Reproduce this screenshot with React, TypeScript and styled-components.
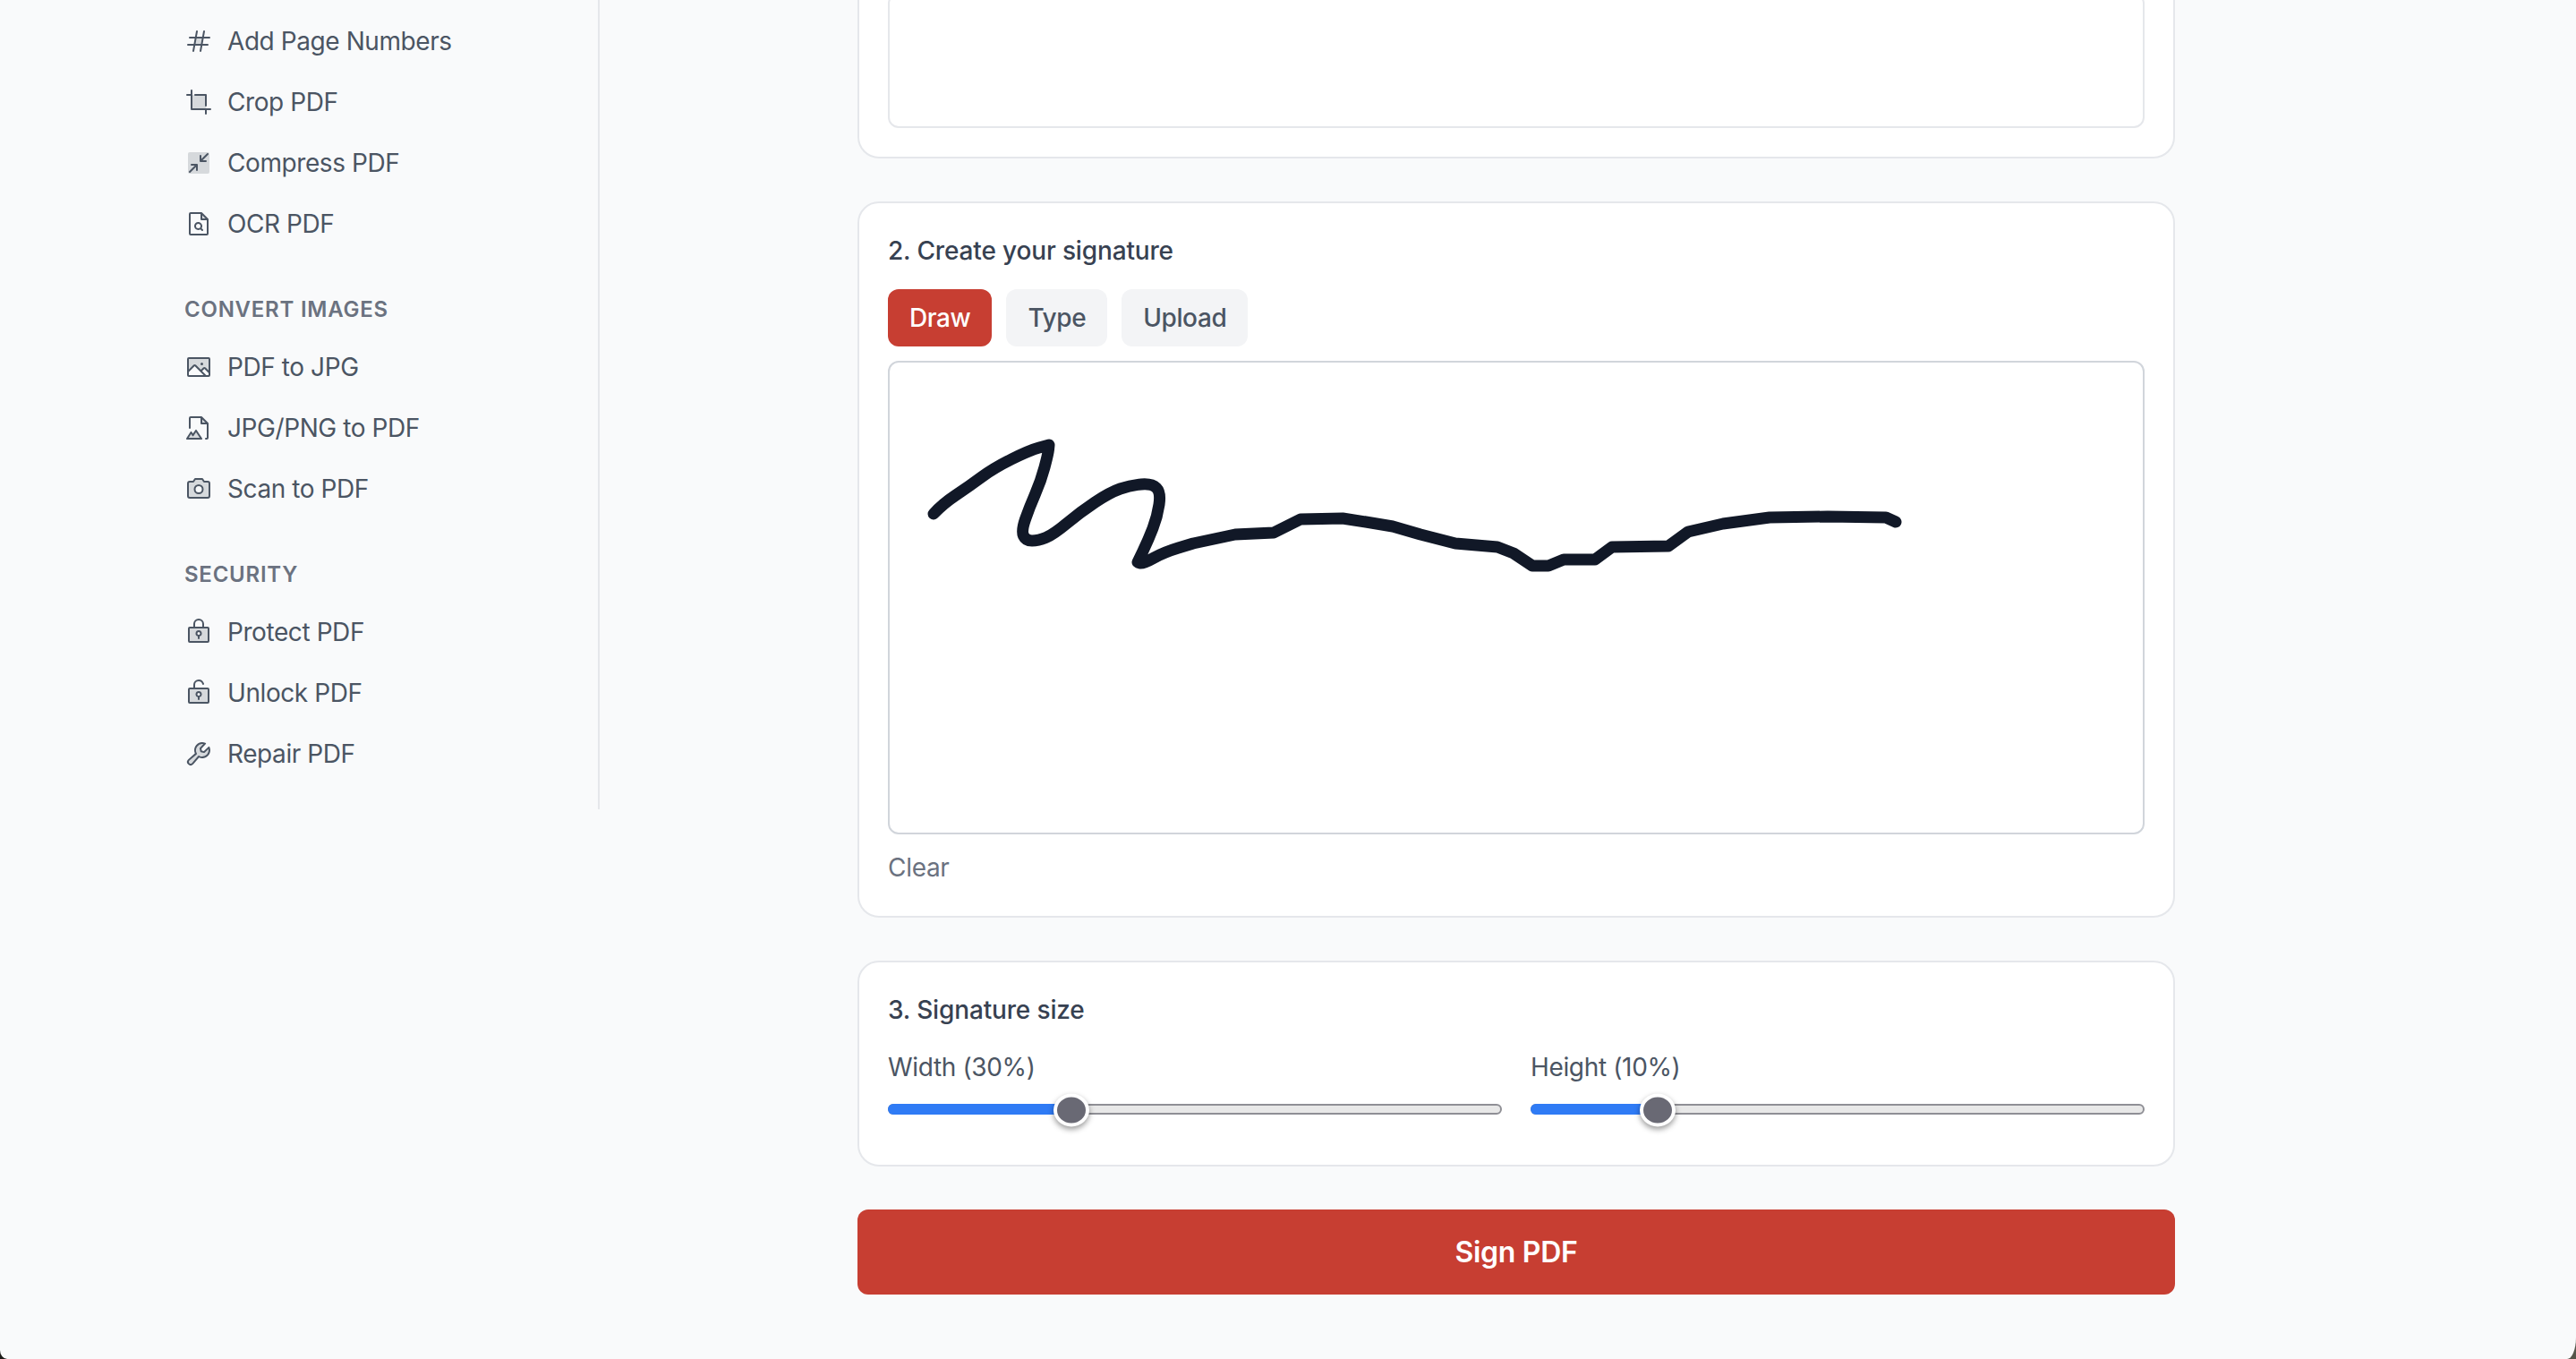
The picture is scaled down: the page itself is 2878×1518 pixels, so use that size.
import React from "react";
import styled, { createGlobalStyle } from "styled-components";
import {
  PiHashDuotone,
  PiCropDuotone,
  PiArrowsInSimpleDuotone,
  PiFileMagnifyingGlassDuotone,
  PiImageDuotone,
  PiFileImageDuotone,
  PiCameraDuotone,
  PiLockKeyDuotone,
  PiLockKeyOpenDuotone,
  PiWrenchDuotone,
} from "react-icons/pi";

const GlobalStyle = createGlobalStyle`
  html, body { margin: 0; padding: 0; background: linear-gradient(to right, #1c1c18, #55554a); }
  body { font-family: Inter, "Liberation Sans", sans-serif; }
  * { box-sizing: border-box; }
`;

const Page = styled.div`
  width: 2878px;
  height: 1518px;
  overflow: hidden;
  display: flex;
  align-items: flex-start;
  background: #f9fafb;
  border-bottom-left-radius: 8px 10px;
  border-bottom-right-radius: 10px 24px;
`;

const Sidebar = styled.aside`
  width: 670px;
  height: 904px;
  flex: none;
  padding: 14px 0 0 206px;
  border-right: 2px solid #e5e7eb;
`;

const NavList = styled.ul`
  list-style: none;
  margin: 0 0 48px;
  padding: 0;
  display: flex;
  flex-direction: column;
  gap: 4px;
`;

const NavItem = styled.li`
  display: flex;
  align-items: center;
  gap: 16px;
  height: 64px;
  font-size: 28px;
  line-height: 40px;
  letter-spacing: -0.42px;
  color: #4b5563;
  svg {
    flex: none;
    width: 32px;
    height: 32px;
    color: #4b5563;
  }
`;

const SectionTitle = styled.h3`
  margin: 0 0 16px;
  font-size: 24px;
  line-height: 32px;
  font-weight: 600;
  letter-spacing: 0.75px;
  text-transform: uppercase;
  color: #6b7280;
`;

const Main = styled.main`
  flex: 1;
  padding: 0 448px 0 288px;
  display: flex;
  flex-direction: column;
  gap: 48px;
`;

const Card = styled.section<{ $bottom?: number }>`
  background: #fff;
  border: 2px solid #e5e7eb;
  border-radius: 24px;
  padding: 32px 32px ${(p) => p.$bottom ?? 32}px;
`;

const ClippedCard = styled(Card)`
  margin-top: -40px;
  height: 217px;
`;

const PreviewBox = styled.div`
  height: 151px;
  border: 2px solid #e5e7eb;
  border-radius: 12px;
  margin-top: -2px;
`;

const CardTitle = styled.h2`
  margin: 0 0 22px;
  font-size: 28px;
  line-height: 42px;
  font-weight: 500;
  letter-spacing: -0.15px;
  color: #374151;
`;

const Tabs = styled.div`
  display: flex;
  gap: 16px;
  margin-bottom: 16px;
`;

const Tab = styled.button<{ $active?: boolean }>`
  height: 64px;
  padding: 0 24px;
  border: 0;
  border-radius: 12px;
  font: 500 28px/40px Inter, "Liberation Sans", sans-serif;
  letter-spacing: -0.4px;
  background: ${(p) => (p.$active ? "#c73e32" : "#f3f4f6")};
  color: ${(p) => (p.$active ? "#ffffff" : "#4b5563")};
`;

const SignatureCanvas = styled.div`
  height: 529px;
  border: 2px solid #d1d5db;
  border-radius: 12px;
  background: #fff;
  overflow: hidden;
  svg {
    display: block;
    width: 100%;
    height: 100%;
  }
`;

const ClearLink = styled.div`
  margin-top: 17px;
  font-size: 28px;
  line-height: 40px;
  letter-spacing: -0.3px;
  color: #6b7280;
`;

const SliderGrid = styled.div`
  display: grid;
  grid-template-columns: 1fr 1fr;
  gap: 32px;
  padding-bottom: 22px;
`;

const SliderLabel = styled.div`
  margin: 1px 0 21px;
  font-size: 28px;
  line-height: 40px;
  letter-spacing: -0.35px;
  color: #4b5563;
`;

const Track = styled.div`
  position: relative;
  height: 12px;
  border: 2px solid #8f8f95;
  border-radius: 6px;
  background: #e8e8e8;
`;

const TrackFill = styled.div`
  position: absolute;
  left: -2px;
  top: -2px;
  bottom: -2px;
  background: #2f7bf5;
  border-radius: 6px 0 0 6px;
`;

const Thumb = styled.div`
  position: absolute;
  top: 50%;
  width: 40px;
  height: 37px;
  transform: translate(-50%, -50%);
  margin-top: 1px;
  border-radius: 50%;
  background: #696974;
  border: 4px solid #fff;
  box-shadow: 0 3px 6px rgba(0, 0, 0, 0.4);
`;

const SignButton = styled.button`
  display: block;
  width: 100%;
  height: 95px;
  border: 0;
  border-radius: 12px;
  background: #c73e32;
  color: #fff;
  font: 600 32px/56px Inter, "Liberation Sans", sans-serif;
  letter-spacing: -0.3px;
`;

type Item = { label: string; Icon: React.ComponentType };

const groups: { title?: string; items: Item[] }[] = [
  {
    items: [
      { label: "Add Page Numbers", Icon: PiHashDuotone },
      { label: "Crop PDF", Icon: PiCropDuotone },
      { label: "Compress PDF", Icon: PiArrowsInSimpleDuotone },
      { label: "OCR PDF", Icon: PiFileMagnifyingGlassDuotone },
    ],
  },
  {
    title: "Convert Images",
    items: [
      { label: "PDF to JPG", Icon: PiImageDuotone },
      { label: "JPG/PNG to PDF", Icon: PiFileImageDuotone },
      { label: "Scan to PDF", Icon: PiCameraDuotone },
    ],
  },
  {
    title: "Security",
    items: [
      { label: "Protect PDF", Icon: PiLockKeyDuotone },
      { label: "Unlock PDF", Icon: PiLockKeyOpenDuotone },
      { label: "Repair PDF", Icon: PiWrenchDuotone },
    ],
  },
];

const sliders = [
  { label: "Width (30%)", position: 29.8 },
  { label: "Height (10%)", position: 20.5 },
];

// The loops at the start are curved: repeated points keep their sharp corners.
const curvedPoints: [number, number][] = [
  [1043, 574], [1053, 563], [1083, 543], [1110, 523], [1150, 503], [1172, 497], [1172, 497], [1171, 507],
  [1163, 537], [1150, 567], [1141, 593], [1146, 604], [1160, 604], [1177, 597], [1207, 572], [1240, 550],
  [1263, 542], [1287, 540], [1297, 550], [1293, 577], [1283, 603], [1271, 628], [1271, 628], [1277, 630],
  [1300, 617], [1333, 607],
];

// The long tail of the stroke is made of short straight runs.
const straightPoints: [number, number][] = [
  [1380, 597], [1423, 595], [1453, 580], [1500, 579], [1526, 583], [1556, 588], [1587, 597], [1626, 607],
  [1673, 611], [1691, 618], [1712, 632], [1730, 632], [1747, 625], [1782, 625], [1801, 611], [1864, 610],
  [1886, 594], [1925, 585], [1977, 578], [2042, 577], [2107, 578], [2118, 583],
];

const strokePath = (curved: [number, number][], straight: [number, number][]) => {
  let d = `M${curved[0][0]} ${curved[0][1]}`;
  for (let i = 1; i < curved.length - 1; i++) {
    const mx = (curved[i][0] + curved[i + 1][0]) / 2;
    const my = (curved[i][1] + curved[i + 1][1]) / 2;
    d += ` Q${curved[i][0]} ${curved[i][1]} ${mx} ${my}`;
  }
  const last = curved[curved.length - 1];
  d += ` L${last[0]} ${last[1]}`;
  return d + straight.map(([x, y]) => ` L${x} ${y}`).join("");
};

export default function App() {
  return (
    <>
      <GlobalStyle />
      <Page>
        <Sidebar>
          {groups.map((group) => (
            <div key={group.items[0].label}>
              {group.title && <SectionTitle>{group.title}</SectionTitle>}
              <NavList>
                {group.items.map(({ label, Icon }) => (
                  <NavItem key={label}>
                    <Icon />
                    {label}
                  </NavItem>
                ))}
              </NavList>
            </div>
          ))}
        </Sidebar>
        <Main>
          <ClippedCard>
            <PreviewBox />
          </ClippedCard>
          <Card $bottom={34}>
            <CardTitle>2. Create your signature</CardTitle>
            <Tabs>
              <Tab $active>Draw</Tab>
              <Tab>Type</Tab>
              <Tab>Upload</Tab>
            </Tabs>
            <SignatureCanvas>
              <svg viewBox="994 405 1400 525" aria-hidden="true">
                <path
                  d={strokePath(curvedPoints, straightPoints)}
                  fill="none"
                  stroke="#111827"
                  strokeWidth="13"
                  strokeLinejoin="round"
                  strokeLinecap="round"
                />
              </svg>
            </SignatureCanvas>
            <ClearLink>Clear</ClearLink>
          </Card>
          <Card $bottom={34}>
            <CardTitle>3. Signature size</CardTitle>
            <SliderGrid>
              {sliders.map((s) => (
                <div key={s.label}>
                  <SliderLabel>{s.label}</SliderLabel>
                  <Track>
                    <TrackFill style={{ width: `${s.position}%` }} />
                    <Thumb style={{ left: `${s.position}%` }} />
                  </Track>
                </div>
              ))}
            </SliderGrid>
          </Card>
          <SignButton>Sign PDF</SignButton>
        </Main>
      </Page>
    </>
  );
}
